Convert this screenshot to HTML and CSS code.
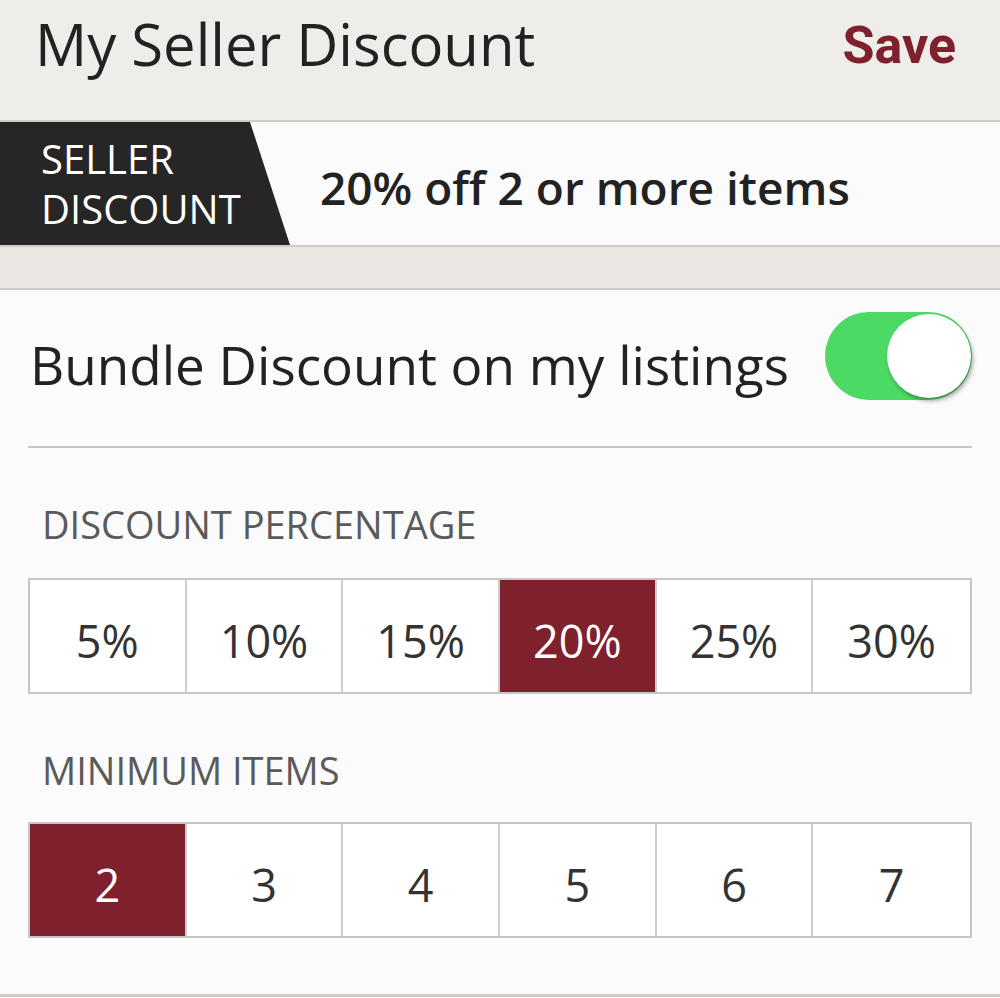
FILE: index.html
```html
<!DOCTYPE html>
<html lang="en">
<head>
    <meta charset="UTF-8">
    <meta name="viewport" content="width=device-width, initial-scale=1.0">
    <title>My Seller Discount</title>
    <link rel="stylesheet" href="styles.css">
</head>
<body>
    <div class="toolbar">
        <div class="title">My Seller Discount</div>
        <a class="save" href="#">Save</a>
    </div>

    <div class="banner">
        <div class="tag">SELLER<br>DISCOUNT</div>
        <div class="summary">20% off 2 or more items</div>
    </div>

    <div class="spacer"></div>

    <div class="panel">
        <div class="switch-row">
            <div class="switch-label">Bundle Discount on my listings</div>
            <div class="switch on"><div class="knob"></div></div>
        </div>

        <div class="section-title">DISCOUNT PERCENTAGE</div>
        <div class="segments">
            <div class="segment">5%</div>
            <div class="segment">10%</div>
            <div class="segment">15%</div>
            <div class="segment selected">20%</div>
            <div class="segment">25%</div>
            <div class="segment">30%</div>
        </div>

        <div class="section-title">MINIMUM ITEMS</div>
        <div class="segments">
            <div class="segment selected">2</div>
            <div class="segment">3</div>
            <div class="segment">4</div>
            <div class="segment">5</div>
            <div class="segment">6</div>
            <div class="segment">7</div>
        </div>
    </div>
</body>
</html>
```

FILE: styles.css
```css
body {
    margin: 0;
    font-family: "Open Sans", Lato, sans-serif;
    background: #fbfbfb;
    color: #222;
}

.toolbar {
    display: flex;
    justify-content: space-between;
    align-items: flex-start;
    height: 120px;
    padding: 0 44px 0 35px;
    background: #efedea;
    border-bottom: 2px solid #cfccc7;
}

.title {
    font-size: 58px;
    line-height: 60px;
    margin-top: 14px;
    color: #222;
}

.save {
    font-family: Roboto, sans-serif;
    font-weight: bold;
    font-size: 52px;
    line-height: 52px;
    margin-top: 20px;
    color: #7f202d;
    text-decoration: none;
}

.banner {
    display: flex;
    align-items: center;
    height: 123px;
    background: #fbfbfb;
    border-bottom: 2px solid #cfccc7;
}

.tag {
    align-self: stretch;
    box-sizing: border-box;
    width: 290px;
    padding: 12px 0 0 41px;
    background: #262626;
    clip-path: polygon(0 0, 250px 0, 290px 100%, 0 100%);
    color: #fff;
    font-size: 40px;
    line-height: 50px;
}

.summary {
    margin: 6px 0 0 30px;
    font-size: 46px;
    font-weight: 600;
    color: #222;
}

.spacer {
    height: 41px;
    background: #ebe8e3;
    border-bottom: 2px solid #cfccc7;
}

.panel {
    padding: 0 28px 56px;
    border-bottom: 3px solid #cfccc7;
}

.switch-row {
    display: flex;
    justify-content: space-between;
    align-items: center;
    height: 156px;
    padding-left: 2px;
    border-bottom: 2px solid #c8c6c2;
}

.switch-label {
    font-size: 53px;
    padding-bottom: 8px;
}

.switch {
    width: 147px;
    height: 88px;
    margin-bottom: 24px;
    border-radius: 44px;
    background: #e5e5e5;
    display: flex;
    align-items: center;
}

.switch.on {
    background: #4cd964;
    justify-content: flex-end;
}

.knob {
    width: 84px;
    height: 84px;
    margin-right: 1px;
    border-radius: 50%;
    background: #fff;
    box-shadow: 2px 3px 4px rgba(0, 0, 0, 0.35);
}

.section-title {
    padding: 54px 0 0 14px;
    height: 76px;
    font-size: 38px;
    line-height: 44px;
    color: #5a5a5a;
}

.section-title + .segments + .section-title {
    height: 74px;
}

.segments {
    display: grid;
    grid-template-columns: repeat(6, 1fr);
    border: 2px solid #c8c6c2;
    height: 112px;
}

.segment {
    display: flex;
    align-items: center;
    justify-content: center;
    padding-top: 8px;
    font-size: 45px;
    color: #333;
    background: #fff;
    border-right: 2px solid #d0cecb;
}

.segment:last-child {
    border-right: none;
}

.segment.selected {
    background: #7f202d;
    color: #fff;
}
```
